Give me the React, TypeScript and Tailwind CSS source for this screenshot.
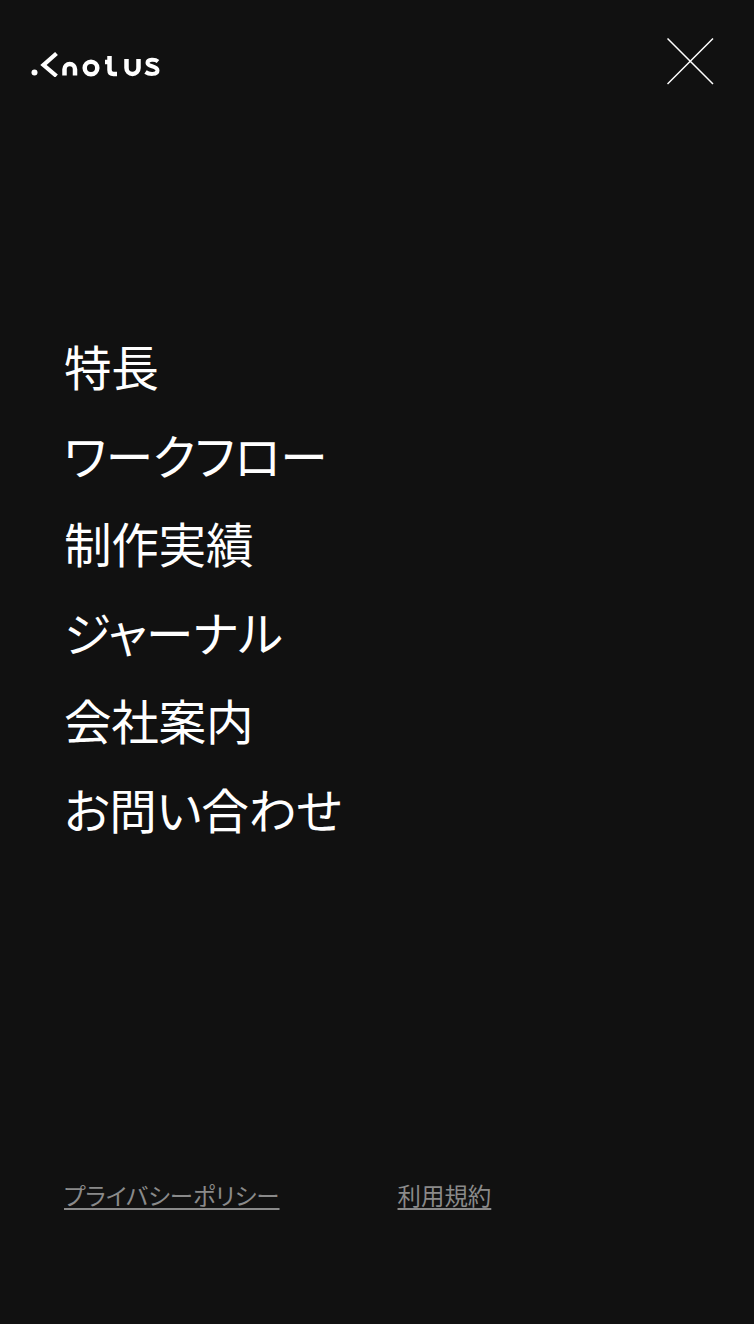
const navItems = ['特長', 'ワークフロー', '制作実績', 'ジャーナル', '会社案内', 'お問い合わせ'];

const Logo = () => (
  <svg width="130" height="26" viewBox="0 0 130 26" fill="none" stroke="white" strokeWidth="4.5" className="block">
    <circle cx="3.5" cy="21.5" r="3" fill="white" stroke="none" />
    <path d="M25.5 2.5 L12.5 14 L25.5 25" strokeWidth="4.2" />
    <path d="M33.5 24.5 V18.25 a5.25 5.25 0 0 1 10.5 0 V24.5" />
    <circle cx="60" cy="17" r="6.3" />
    <path d="M74 11 H79 M78.5 5 V19 q0 4 4 4 H86" />
    <path d="M95.5 8 V17 a6 6 0 0 0 12 0 V8" />
    <path d="M127 10.5 C124 8 116.5 8 116.5 12 C116.5 16 126.5 14.5 126.5 19.5 C126.5 24 118 23.5 114.5 21" strokeWidth="4" />
  </svg>
);

const App = () => {
  return (
    <div className="h-[1324px] bg-[#111111] text-white flex flex-col font-['Noto_Sans_CJK_JP','Noto_Sans_CJK_SC',sans-serif] [font-feature-settings:'palt']">
      <header className="flex items-start justify-between pl-[31px] pr-[40px] pt-[38px]">
        <div className="pt-[13px]">
          <Logo />
        </div>
        <svg width="47" height="47" viewBox="0 0 47 47" stroke="white" strokeWidth="1.5" className="block">
          <path d="M0.5 0.5 L46 46 M46 0.5 L0.5 46" />
        </svg>
      </header>

      <nav className="mt-[237px] pl-[64px] flex flex-col">
        {navItems.map((item) => (
          <a key={item} href="#" className="text-[47.6px] leading-[88.6px] tracking-[-0.3px] font-normal">
            {item}
          </a>
        ))}
      </nav>

      <footer className="mt-[324px] pl-[64px] flex gap-[118px] text-[23.45px] leading-[34px] text-[#8a8a8a]">
        <a href="#" className="underline decoration-2 underline-offset-[3px]">プライバシーポリシー</a>
        <a href="#" className="underline decoration-2 underline-offset-[3px]">利用規約</a>
      </footer>
    </div>
  );
};

export default App;
